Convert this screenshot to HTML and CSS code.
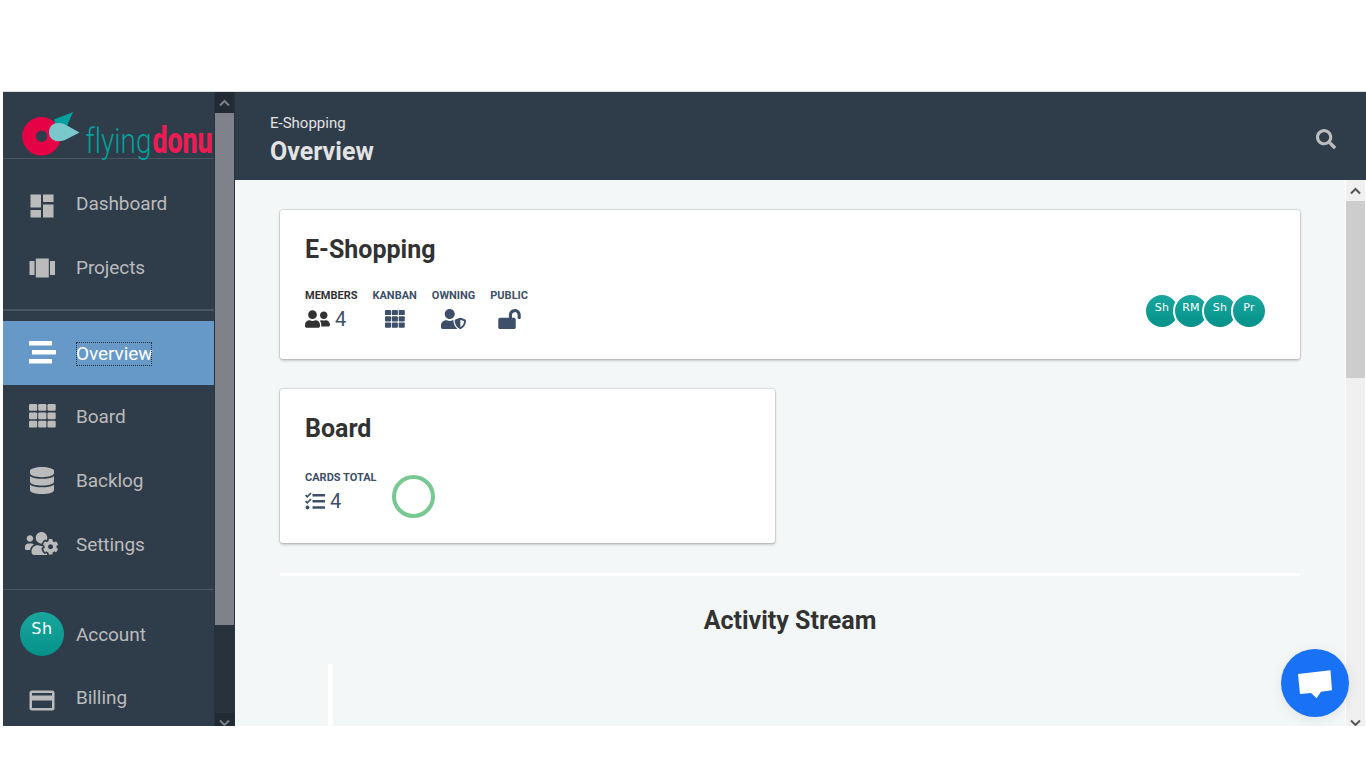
FILE: index.html
```html
<!DOCTYPE html>
<html lang="en">
<head>
<meta charset="utf-8">
<title>Overview - E-Shopping</title>
<link rel="stylesheet" href="styles.css">
</head>
<body>
<div class="app">
  <aside class="sidebar">
    <div class="logo">
      <svg width="211" height="66" viewBox="3 92 211 66">
        <path d="M54 119.500L73 112l-6 14-10 4z" fill="#00a19c"/>
        <circle cx="41.500" cy="136.300" r="12.500" fill="none" stroke="#e60045" stroke-width="13.500"/>
        <path d="M79.500 132.500L66 139.600c-8 4-17 .8-17-7.400 0-8.600 9-11.500 17-7.200z" fill="#79c9cc"/>
        <text class="logo-thin" x="85.500" y="152.500" textLength="66" lengthAdjust="spacingAndGlyphs">flying</text>
        <text class="logo-bold" x="152.500" y="153" textLength="60" lengthAdjust="spacingAndGlyphs">donu</text>
      </svg>
    </div>
    <nav class="group group-top">
      <a class="item"><span class="ico"><svg width="24" height="24" viewBox="0 0 24 24"><path d="M.5.500h10.500v13H.5zM13 .500h10.500v7.500H13zM.5 16h10.500v7.500H.5zM13 10.500h10.500v13H13z"/></svg></span><span class="label">Dashboard</span></a>
      <a class="item"><span class="ico ico-projects"><svg width="26" height="20" viewBox="0 0 26 20"><path d="M.5 3h5v14h-5zM6.800.500h13v19h-13zM21 3h5v14h-5z"/></svg></span><span class="label">Projects</span></a>
    </nav>
    <nav class="group group-project">
      <a class="item active"><span class="ico"><svg width="27" height="25" viewBox="0 0 27 25"><path d="M0 1h23v4.500H0zM3 10h24v4.500H3zM0 19h23v4.500H0z"/></svg></span><span class="label">Overview</span></a>
      <a class="item"><span class="ico ico-up"><svg width="27" height="24" viewBox="0 0 27 24"><use href="#grid"/></svg></span><span class="label">Board</span></a>
      <a class="item"><span class="ico ico-up"><svg width="24" height="27" viewBox="0 0 448 512" preserveAspectRatio="none"><path d="M448 73.143v45.714C448 159.143 347.667 192 224 192S0 159.143 0 118.857V73.143C0 32.857 100.333 0 224 0s224 32.857 224 73.143zM448 176v102.857C448 319.143 347.667 352 224 352S0 319.143 0 278.857V176c48.125 33.143 136.208 48.572 224 48.572S399.874 209.143 448 176zm0 160v102.857C448 479.143 347.667 512 224 512S0 479.143 0 438.857V336c48.125 33.143 136.208 48.572 224 48.572S399.874 369.143 448 336z"/></svg></span><span class="label">Backlog</span></a>
      <a class="item"><span class="ico ico-team"><svg width="33" height="27" viewBox="0 0 640 512"><path d="M610.5 341.3c2.6-14.1 2.6-28.5 0-42.6l25.8-14.9c3-1.700 4.300-5.200 3.300-8.500-6.700-21.600-18.200-41.200-33.200-57.400-2.300-2.500-6-3.100-9-1.400l-25.800 14.900c-10.900-9.300-23.400-16.500-36.900-21.300v-29.800c0-3.400-2.400-6.400-5.700-7.100-22.300-5-45-4.800-66.200 0-3.300.7-5.700 3.700-5.700 7.100v29.800c-13.500 4.800-26 12-36.900 21.300l-25.800-14.900c-2.900-1.700-6.700-1.100-9 1.400-15 16.200-26.500 35.800-33.200 57.400-1 3.300.4 6.800 3.300 8.500l25.800 14.900c-2.600 14.100-2.600 28.500 0 42.600l-25.800 14.900c-3 1.700-4.300 5.200-3.300 8.500 6.700 21.600 18.200 41.100 33.200 57.400 2.300 2.500 6 3.100 9 1.400l25.800-14.900c10.900 9.300 23.400 16.500 36.900 21.300v29.800c0 3.400 2.400 6.400 5.700 7.100 22.300 5 45 4.800 66.200 0 3.300-.7 5.700-3.700 5.700-7.100v-29.800c13.500-4.800 26-12 36.900-21.300l25.800 14.900c2.900 1.700 6.700 1.100 9-1.400 15-16.200 26.500-35.800 33.200-57.400 1-3.300-.4-6.800-3.300-8.500l-25.800-14.900zM496 368.500c-26.800 0-48.500-21.800-48.500-48.500s21.800-48.500 48.500-48.500 48.500 21.800 48.500 48.500-21.700 48.500-48.500 48.500zM96 224c35.300 0 64-28.700 64-64s-28.700-64-64-64-64 28.700-64 64 28.700 64 64 64zm224 32c1.900 0 3.700-.5 5.600-.6 8.300-21.700 20.500-42.100 36.300-59.200 7.400-8 17.900-12.600 28.900-12.600 6.900 0 13.700 1.800 19.600 5.300l7.900 4.600c.8-.5 1.600-.9 2.400-1.400 7-14.600 11.200-30.800 11.200-48 0-61.900-50.100-112-112-112S208 82.100 208 144c0 61.900 50.100 112 112 112zm105.200 194.500c-2.300-1.200-4.600-2.600-6.800-3.900-8.200 4.800-15.300 9.800-27.500 9.800-10.900 0-21.400-4.600-28.900-12.600-18.300-19.800-32.300-43.900-40.200-69.600-10.700-34.500 24.900-49.700 25.800-50.300-.1-2.600-.1-5.200 0-7.800l-7.900-4.600c-3.800-2.200-7-5-9.800-8.100-3.300.2-6.500.6-9.800.6-24.600 0-47.600-6-68.500-16h-8.300C179.600 288 128 339.600 128 403.200V432c0 26.500 21.500 48 48 48h255.400c-3.700-6-6.200-12.800-6.200-20.300v-9.200zM173.100 274.600C161.500 263.100 145.600 256 128 256H64c-35.300 0-64 28.700-64 64v32c0 17.700 14.300 32 32 32h65.900c6.300-47.400 34.900-87.300 75.200-109.400z"/></svg></span><span class="label">Settings</span></a>
    </nav>
    <nav class="group group-user">
      <a class="item"><span class="ico"><span class="avatar avatar-lg">Sh</span></span><span class="label label-low">Account</span></a>
      <a class="item"><span class="ico ico-low"><svg width="26" height="21" viewBox="0 0 26 21"><path fill-rule="evenodd" d="M3 .500h20a2.500 2.500 0 0 1 2.500 2.500v15a2.500 2.500 0 0 1-2.500 2.500H3A2.500 2.500 0 0 1 .5 18V3A2.500 2.500 0 0 1 3 .500zM3 3v2.500h20V3zM3 10.500V18h20v-7.500z"/></svg></span><span class="label">Billing</span></a>
    </nav>
  </aside>
  <div class="bar bar-dark">
    <span class="bar-btn"><svg width="11" height="8" viewBox="0 0 11 8"><path d="M1 6.500l4.500-4.500L10 6.500"/></svg></span>
    <span class="bar-thumb"></span>
    <span class="bar-track"></span>
    <span class="bar-btn bar-end"><svg width="11" height="7" viewBox="0 0 11 7"><path d="M1 1.500L5.500 6 10 1.500"/></svg></span>
  </div>
  <div class="main">
    <header class="header">
      <div class="titles">
        <div class="crumb">E-Shopping</div>
        <h1 class="page-title">Overview</h1>
      </div>
      <svg class="search" width="20" height="20" viewBox="0 0 512 512"><path d="M505 442.700L405.300 343c-4.500-4.500-10.600-7-17-7H372c27.600-35.300 44-79.700 44-128C416 93.100 322.900 0 208 0S0 93.100 0 208s93.100 208 208 208c48.300 0 92.700-16.400 128-44v16.300c0 6.400 2.500 12.500 7 17l99.700 99.700c9.400 9.400 24.600 9.400 33.900 0l28.300-28.300c9.400-9.400 9.400-24.600.1-34zM208 336c-70.700 0-128-57.200-128-128 0-70.700 57.200-128 128-128 70.700 0 128 57.200 128 128 0 70.700-57.200 128-128 128z"/></svg>
    </header>
    <div class="body">
      <div class="content">
        <section class="card card-project">
          <h2 class="card-title">E-Shopping</h2>
          <div class="card-row">
            <div class="stats">
              <div class="stat"><span class="stat-name dark">MEMBERS</span><span class="stat-value"><svg class="dark" width="25" height="20" viewBox="0 0 640 512"><path d="M192 256c61.900 0 112-50.100 112-112S253.900 32 192 32 80 82.100 80 144s50.100 112 112 112zm76.800 32h-8.300c-20.800 10-43.900 16-68.500 16s-47.600-6-68.500-16h-8.300C51.600 288 0 339.600 0 403.200V432c0 26.500 21.500 48 48 48h288c26.500 0 48-21.500 48-48v-28.800c0-63.600-51.600-115.200-115.200-115.200zM480 256c53 0 96-43 96-96s-43-96-96-96-96 43-96 96 43 96 96 96zm48 32h-3.800c-13.900 4.800-28.600 8-44.200 8s-30.300-3.200-44.200-8H432c-20.400 0-39.200 5.900-55.700 15.400 24.400 26.300 39.700 61.200 39.700 99.800v38.400c0 2.200-.5 4.300-.6 6.400H592c26.500 0 48-21.500 48-48 0-61.900-50.100-112-112-112z"/></svg>4</span></div>
              <div class="stat centered"><span class="stat-name">KANBAN</span><span class="stat-value"><svg width="20" height="18" viewBox="0 0 27 24" preserveAspectRatio="none"><use href="#grid"/></svg></span></div>
              <div class="stat centered"><span class="stat-name">OWNING</span><span class="stat-value"><svg width="25" height="20" viewBox="0 0 640 512"><path d="M622.300 271.100l-115.200-45c-4.100-1.600-12.600-3.700-22.200 0l-115.200 45c-10.700 4.200-17.700 14-17.700 24.900 0 111.600 68.700 188.800 132.900 213.900 9.600 3.700 18 1.600 22.200 0C558.400 489.900 640 420.500 640 296c0-10.900-7-20.700-17.700-24.900zM496 462.400V273.300l95.500 37.300c-5.600 87.100-60.900 135.400-95.500 151.800zM224 256c70.700 0 128-57.300 128-128S294.700 0 224 0 96 57.300 96 128s57.300 128 128 128zm96 40c0-2.500.8-4.800 1.100-7.200-2.500-.1-4.900-.8-7.500-.8h-16.700c-22.200 10.200-46.900 16-72.900 16s-50.600-5.800-72.900-16h-16.700C60.200 288 0 348.200 0 422.400V464c0 26.500 21.500 48 48 48h352c6.800 0 13.300-1.500 19.200-4-54-42.900-99.200-116.700-99.200-212z"/></svg></span></div>
              <div class="stat centered"><span class="stat-name">PUBLIC</span><span class="stat-value"><svg width="23" height="20" viewBox="0 0 576 512"><path d="M423.500 0C339.500.3 272 69.500 272 153.500V224H48c-26.500 0-48 21.500-48 48v192c0 26.500 21.500 48 48 48h352c26.500 0 48-21.500 48-48V272c0-26.500-21.500-48-48-48h-48v-71.100c0-39.600 31.700-72.500 71.300-72.900 40-.4 72.700 32.100 72.700 72v80c0 13.300 10.700 24 24 24h32c13.300 0 24-10.700 24-24v-80C576 68 507.500-.3 423.500 0z"/></svg></span></div>
            </div>
            <div class="people">
              <span class="avatar avatar-sm">Sh</span><span class="avatar avatar-sm">RM</span><span class="avatar avatar-sm">Sh</span><span class="avatar avatar-sm">Pr</span>
            </div>
          </div>
        </section>
        <section class="card card-board">
          <h2 class="card-title">Board</h2>
          <div class="stats">
            <div class="stat"><span class="stat-name">CARDS TOTAL</span><span class="stat-value"><svg width="20" height="18" viewBox="0 0 20 18"><path d="M7.500 2h12.500v2.500H7.500zM7.500 8h12.500v2.500H7.500zM7.500 14.300h12.500v2.500H7.500z"/><circle cx="2.500" cy="15.500" r="1.900"/><path class="ticks" d="M.5 3l1.800 1.800L6 1M.5 9l1.800 1.800L6 7"/></svg>4</span></div>
            <span class="ring"></span>
          </div>
        </section>
        <hr class="rule">
        <h2 class="stream-title">Activity Stream</h2>
        <div class="timeline"></div>
      </div>
      <div class="bar bar-light">
        <span class="bar-btn"><svg width="11" height="8" viewBox="0 0 11 8"><path d="M1 6.500l4.500-4.500L10 6.500"/></svg></span>
        <span class="bar-thumb"></span>
        <span class="bar-track"></span>
        <span class="bar-btn bar-end"><svg width="11" height="7" viewBox="0 0 11 7"><path d="M1 1.500L5.500 6 10 1.500"/></svg></span>
      </div>
    </div>
  </div>
  <div class="chat"><svg width="68" height="68" viewBox="0 0 68 68"><path d="M17 25l32.500-3.800L51 41.300l-11 1.500-4.500 6.500-5.500-5.300-11 1z"/></svg></div>
</div>
<svg width="0" height="0" class="defs"><defs><g id="grid"><rect width="8.200" height="6.800" rx="1.200"/><rect x="9.200" width="8.200" height="6.800" rx="1.200"/><rect x="18.500" width="8.200" height="6.800" rx="1.200"/><rect y="8.400" width="8.200" height="6.800" rx="1.200"/><rect x="9.200" y="8.400" width="8.200" height="6.800" rx="1.200"/><rect x="18.500" y="8.400" width="8.200" height="6.800" rx="1.200"/><rect y="16.700" width="8.200" height="6.800" rx="1.200"/><rect x="9.200" y="16.700" width="8.200" height="6.800" rx="1.200"/><rect x="18.500" y="16.700" width="8.200" height="6.800" rx="1.200"/></g></defs></svg>
</body>
</html>
```
FILE: styles.css
```css
* { box-sizing: border-box; }
body { margin: 0; background: #fff; font-family: Roboto, sans-serif; overflow: hidden; }
h1, h2 { margin: 0; font-weight: 700; }
svg { display: block; flex: none; }
.defs { position: absolute; }
.app { position: relative; display: flex; height: 635px; margin: 91px 0 0 3px; border-top: 1px solid #dde1e6; overflow: hidden; }

.sidebar { width: 211px; flex: none; background: #2f3c4a; overflow: hidden; }
.logo { height: 67px; border-bottom: 1px solid #4a5560; }
.logo svg { overflow: visible; }
.logo text { font-variant-ligatures: none; }
.logo-thin { font: 300 35px Roboto, sans-serif; fill: #00a19c; }
.logo-bold { font: 800 37px Roboto, sans-serif; fill: #ef1c54; }
.group-top { height: 152px; padding-top: 14px; border-bottom: 2px solid #4b5662; }
.group-project { height: 279px; padding-top: 10px; border-bottom: 1px solid #4a5560; }
.group-user { padding-top: 12px; }
.item { display: flex; align-items: center; height: 64px; color: #bbb; }
.group-top .item { padding-bottom: 3px; }
.ico { width: 78px; flex: none; display: flex; justify-content: center; fill: #bbb; }
.group-top .ico { padding-top: 4px; }
.group-top .ico-projects { padding: 1px 1px 0 0; }
.ico-low { padding-top: 4px; }
.ico-up { padding-bottom: 2px; }
.ico-team { padding: 0 2px 4px 0; }
.label { margin-left: -5px; font-size: 19px; line-height: 24px; letter-spacing: -.07px; }
.label-low { padding-top: 2px; }
.active { background: #6799c8; color: #fff; }
.active .ico { fill: #fff; padding-bottom: 2px; }
.active .label { margin-top: 2px; outline: 1px dotted #27313b; outline-offset: -1px; }

.avatar { display: flex; justify-content: center; flex: none; border-radius: 50%; background: linear-gradient(#1aa79f, #04918a); color: #fff; font-family: "DejaVu Sans", sans-serif; }
.avatar-lg { width: 44px; height: 44px; font-size: 16px; line-height: 33px; letter-spacing: .5px; }
.avatar-sm { width: 36px; height: 36px; margin-left: -7px; border: 2px solid #fff; font-size: 11px; line-height: 25px; letter-spacing: .3px; }

.bar { display: flex; flex-direction: column; flex: none; width: 21px; fill: none; }
.bar-btn { height: 21px; display: flex; align-items: center; justify-content: center; flex: none; }
.bar-end { height: 13px; align-items: flex-end; overflow: hidden; }
.bar-track { flex: 1; }
.bar-dark { background: #28323c; border: 1px solid #263340; border-width: 0 1px; stroke: #7c8088; stroke-width: 2; }
.bar-dark .bar-btn { background: #222a33; }
.bar-dark .bar-thumb { height: 512px; background: #7f828a; }
.bar-light { background: #f0f0f0; border: 1px solid #fff; border-width: 0 1px; stroke: #555; stroke-width: 2; }
.bar-light .bar-thumb { height: 177px; background: #cdcdcd; }

.main { flex: 1; display: flex; flex-direction: column; }
.header { height: 88px; flex: none; display: flex; justify-content: space-between; padding: 21px 30px 0 35px; background: #2f3c4a; color: #e3e3e3; }
.crumb { font-size: 15px; line-height: 20px; }
.page-title { font-size: 25px; line-height: 38px; }
.search { margin-top: 16px; fill: #bdbdbd; }
.body { flex: 1; display: flex; min-height: 0; }
.content { flex: 1; padding: 30px 45px 0; background: #f3f7f8; overflow: hidden; }
.card { background: #fff; border-radius: 3px; padding: 25px; box-shadow: 0 0 1px 1px rgba(0,0,0,.12), 0 2px 3px rgba(0,0,0,.16); color: #323232; }
.card-project { height: 149px; margin-bottom: 30px; }
.card-board { width: 495px; height: 154px; margin-bottom: 30px; }
.card-title { font-size: 25px; line-height: 30px; }
.card-row { display: flex; justify-content: space-between; }
.stats { display: flex; gap: 15px; padding-top: 24px; }
.card-board .stats { padding-top: 27px; }
.stat { display: flex; flex-direction: column; color: #3d4f69; }
.centered { align-items: center; }
.stat-name { font-size: 11px; line-height: 14px; font-weight: 700; }
.stat-value { display: flex; align-items: center; gap: 5px; height: 32px; font-size: 20px; fill: #3d4f69; }
.stat .dark { color: #323232; fill: #323232; }
.ticks { fill: none; stroke: #3d4f69; stroke-width: 1.7; }
.people { display: flex; padding: 28px 8px 0 0; }
.ring { width: 43px; height: 43px; margin: 4px 0 0 1px; border: 4px solid #78c893; border-radius: 50%; }
.rule { height: 3px; margin: 0; border: 0; background: #fff; }
.stream-title { margin-top: 27px; font-size: 25px; line-height: 36px; text-align: center; color: #323232; }
.timeline { width: 5px; height: 80px; margin: 25px 0 0 48px; background: #fff; }

/* Floating chat launcher */
.chat { position: absolute; right: 17px; bottom: 9px; width: 68px; height: 68px; border-radius: 50%; background: #1972f5; fill: #fff; box-shadow: 0 3px 14px rgba(0,0,0,.08); }
```
